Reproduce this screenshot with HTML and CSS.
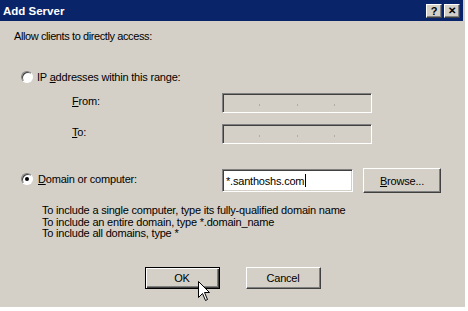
FILE: index.html
```html
<!DOCTYPE html>
<html lang="en">

<head>
  <meta charset="UTF-8">
  <meta name="viewport" content="width=device-width, initial-scale=1.0">
  <title>Add Server</title>

  <link rel="stylesheet" href="styles.css">
</head>

<body>
  <div class="dialog">
    <div class="titlebar">
      <span class="title">Add Server</span>
      <div class="title-btns">
        <span class="tbtn">?</span>
        <span class="tbtn close">&#x2715;</span>
      </div>
    </div>

    <div class="content">
      <p class="lead">Allow clients to directly access:</p>

      <label class="option">
        <span class="radio"></span>
        <span>IP <u>a</u>ddresses within this range:</span>
      </label>

      <div class="range">
        <span class="range-label"><u>F</u>rom:</span>
        <div class="ipbox"><i></i><i></i><i></i></div>
        <span class="range-label"><u>T</u>o:</span>
        <div class="ipbox"><i></i><i></i><i></i></div>
      </div>

      <div class="domain-row">
        <label class="option">
          <span class="radio checked"></span>
          <span><u>D</u>omain or computer:</span>
        </label>
        <div class="textbox">*.santhoshs.com<span class="caret"></span></div>
        <button class="btn browse"><u>B</u>rowse...</button>
      </div>

      <div class="hint">
        <div>To include a single computer, type its fully-qualified domain name</div>
        <div>To include an entire domain, type *.domain_name</div>
        <div>To include all domains, type *</div>
      </div>

      <div class="actions">
        <button class="btn default">OK</button>
        <button class="btn">Cancel</button>
      </div>
    </div>

    <!-- mouse pointer over the OK button -->
    <svg class="cursor" width="13" height="21" viewBox="0 0 13 21">
      <path d="M0.5 0.5 L0.5 16.5 L4.5 12.5 L7.5 19.5 L9.5 18.5 L6.5 11.5 L11.5 11.5 Z" fill="#fff" stroke="#000" stroke-width="1" />
    </svg>
  </div>
</body>

</html>
```

FILE: styles.css
```css
body {
  background: #fff;
  margin: 0;
}

.dialog {
  background: #d4d0c8;
  color: #000;
  font-family: "Liberation Sans", Arial, sans-serif;
  font-size: 11px;
  height: 307px;
  letter-spacing: -0.2px;
  position: relative;
  width: 465px;
}

.titlebar {
  align-items: center;
  background: #0a246a;
  display: flex;
  height: 21px;
  justify-content: space-between;
  padding: 0 3px 0 3px;
  width: 457px;
}

.title {
  color: #fff;
  font-size: 11.5px;
  font-weight: bold;
  letter-spacing: 0;
}

.title-btns {
  display: flex;
  gap: 2px;
}

.tbtn {
  background: #d4d0c8;
  border: 1px solid;
  border-color: #fff #404040 #404040 #fff;
  box-shadow: inset -1px -1px 0 #808080;
  box-sizing: border-box;
  display: flex;
  align-items: center;
  justify-content: center;
  font-size: 11px;
  font-weight: bold;
  height: 14px;
  letter-spacing: 0;
  width: 16px;
}

.close {
  font-size: 10px;
}

.content {
  padding-left: 14px;
}

.lead {
  letter-spacing: -0.4px;
  line-height: 12px;
  margin: 0;
  padding-top: 9px;
}

.option {
  align-items: center;
  display: flex;
  gap: 4px;
  line-height: 12px;
}

.content > .option {
  margin: 29px 0 0 7px;
}

.radio {
  background: #fff;
  border: 1px solid;
  border-color: #808080 #fff #fff #808080;
  border-radius: 50%;
  box-shadow: inset 1px 1px 0 #404040;
  box-sizing: border-box;
  display: flex;
  align-items: center;
  justify-content: center;
  height: 12px;
  width: 12px;
}

.radio.checked::after {
  background: #000;
  border-radius: 50%;
  content: "";
  height: 4px;
  width: 4px;
}

.range {
  align-items: center;
  display: grid;
  grid-template-columns: 150px 150px;
  margin: 10px 0 0 58px;
  row-gap: 11px;
}

.range-label {
  line-height: 12px;
  padding-bottom: 5px;
}

.ipbox,
.textbox {
  border: 1px solid;
  border-color: #808080 #fff #fff #808080;
  box-shadow: inset 1px 1px 0 #404040, inset -1px -1px 0 #d4d0c8;
  box-sizing: border-box;
}

.ipbox {
  align-items: center;
  display: flex;
  height: 20px;
  justify-content: space-evenly;
  padding-top: 3px;
  width: 150px;
}

.ipbox i {
  background: #b0aca4;
  height: 2px;
  width: 1px;
}

.domain-row {
  align-items: center;
  display: grid;
  grid-template-columns: 191px 131px 78px;
  column-gap: 10px;
  margin: 24px 0 0 7px;
}

.domain-row .option {
  gap: 5px;
  margin-top: -4px;
}

.textbox {
  align-items: center;
  background: #fff;
  display: flex;
  height: 23px;
  padding-left: 3px;
}

.caret {
  background: #000;
  height: 13px;
  margin-left: 1px;
  width: 1px;
}

.btn {
  background: #d4d0c8;
  border: 1px solid;
  border-color: #fff #404040 #404040 #fff;
  box-shadow: inset -1px -1px 0 #808080;
  color: #000;
  font-family: inherit;
  font-size: 11px;
  height: 22px;
  letter-spacing: -0.2px;
  padding: 0;
  width: 75px;
}

.browse {
  height: 25px;
  width: 78px;
}

.hint {
  line-height: 11.5px;
  margin: 12px 0 0 28px;
}

.actions {
  display: flex;
  gap: 26px;
  justify-content: center;
  margin: 27px 14px 0 0;
}

.btn.default {
  border-color: #000;
  box-shadow: inset 1px 1px 0 #fff, inset -1px -1px 0 #404040, inset -2px -2px 0 #808080;
}

.cursor {
  left: 198px;
  position: absolute;
  top: 281px;
}
```
